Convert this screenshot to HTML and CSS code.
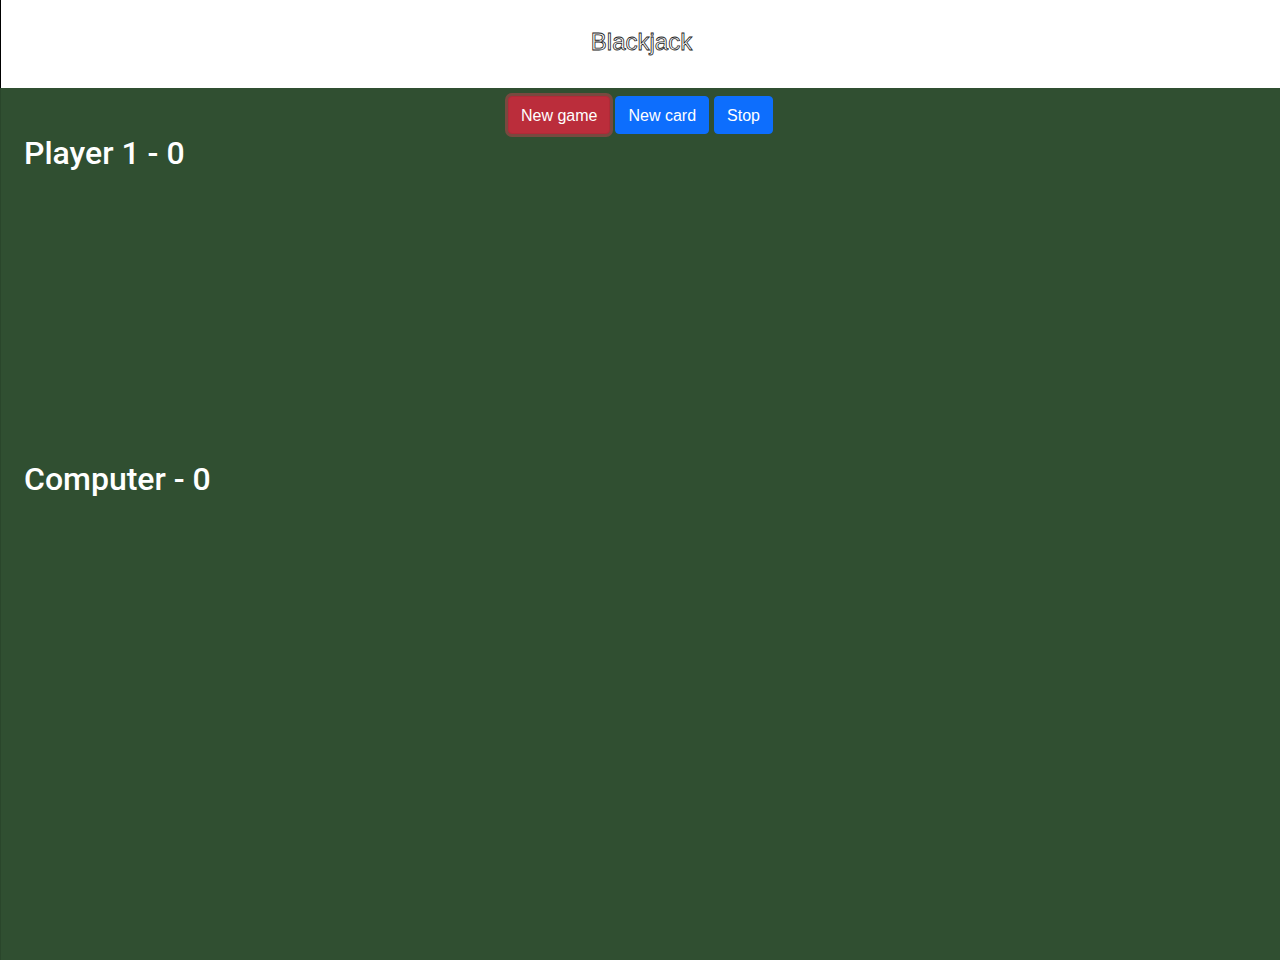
FILE: index.html
```html
<!DOCTYPE html>
<html lang="en">
<head>
<meta charset="utf-8">
<title>Blackjack</title>
<link rel="stylesheet" href="styles.css">
</head>
<body>
<header class="topbar">
  <h1 class="title">Blackjack</h1>
</header>
<main class="table">
  <div class="actions">
    <button class="btn btn-danger is-focused" type="button">New game</button>
    <button class="btn btn-primary" type="button">New card</button>
    <button class="btn btn-primary" type="button">Stop</button>
  </div>
  <section class="hand">
    <h2 class="hand-title">Player 1 - <span class="score">0</span></h2>
    <div class="cards"></div>
  </section>
  <section class="hand">
    <h2 class="hand-title">Computer - <span class="score">0</span></h2>
    <div class="cards"></div>
  </section>
</main>
</body>
</html>
```

FILE: styles.css
```css
* { box-sizing: border-box; }

html, body {
  margin: 0;
  padding: 0;
  height: 100%;
}

body {
  font-family: "Liberation Sans", Arial, sans-serif;
  background: #304f31;
  color: #fff;
  display: flex;
  flex-direction: column;
}

.topbar {
  height: 88px;
  background: #fff;
  border-left: 1px solid #000;
  display: flex;
  align-items: center;
  justify-content: center;
  padding-bottom: 4px;
  flex-shrink: 0;
}

.title {
  margin: 0;
  padding-left: 2px;
  font-family: "Liberation Sans", Arial, sans-serif;
  font-size: 24px;
  font-weight: 400;
  line-height: 1;
  color: #fff;
  -webkit-text-stroke: 0.8px #222;
}

.table {
  flex: 1;
  border-left: 1px solid #2a462b;
  padding: 0 23px;
}

.actions {
  display: flex;
  justify-content: center;
  gap: 5px;
  margin-top: 8px;
}

.btn {
  font-family: "Liberation Sans", Arial, sans-serif;
  font-size: 16px;
  line-height: 24px;
  padding: 7px 12px 5px;
  border: 1px solid transparent;
  border-radius: 4px;
  color: #fff;
  cursor: pointer;
}

.btn-danger {
  background: #bb2d3b;
  border-color: #b02a37;
}

.btn-danger.is-focused {
  box-shadow: 0 0 0 3px rgba(180, 70, 75, 0.55);
}

.btn-primary {
  background: #0d6efd;
  border-color: #0d6efd;
}

.hand-title {
  margin: 0 0 8px;
  font-family: Roboto, "Liberation Sans", Arial, sans-serif;
  font-size: 32px;
  font-weight: 500;
  line-height: 1.2;
}

.cards {
  min-height: 280px;
}
```
